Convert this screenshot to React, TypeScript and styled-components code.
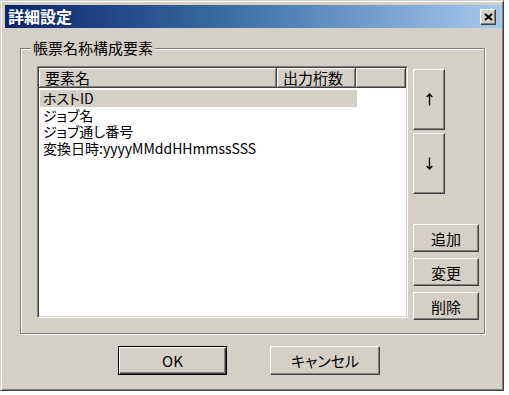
import React from "react";
import styled, { createGlobalStyle, css } from "styled-components";

const Global = createGlobalStyle`
  html, body { margin: 0; padding: 0; background: #ffffff; }
  body { font-family: "Noto Sans CJK JP", "Noto Sans", sans-serif; }
  * { box-sizing: border-box; }
`;

const FONT = `"Noto Sans CJK JP", "Noto Sans", sans-serif`;

const Window = styled.div`
  width: 504px;
  height: 391px;
  background: #d4d0c8;
  border: 1px solid;
  border-color: #d4d0c8 #404040 #404040 #d4d0c8;
  box-shadow: inset 1px 1px 0 #ffffff, inset -1px -1px 0 #808080;
  padding: 4px 1px 2px 4px;
  display: flex;
  flex-direction: column;
  font-family: ${FONT};
  font-feature-settings: "palt";
  color: #000;
`;

const TitleBar = styled.div`
  height: 23px;
  flex: 0 0 23px;
  display: flex;
  align-items: center;
  justify-content: space-between;
  padding: 0 6px 0 3px;
  background: linear-gradient(to right, #0a246a 0%, #3a6ea5 45%, #a6caf0 100%);
`;

const TitleText = styled.span`
  color: #ffffff;
  font-weight: bold;
  font-size: 16px;
  line-height: 23px;
`;

const CloseButton = styled.button`
  width: 16px;
  height: 16px;
  padding: 0;
  display: flex;
  align-items: center;
  justify-content: center;
  background: #d4d0c8;
  border: 1px solid;
  border-color: #ffffff #404040 #404040 #ffffff;
  box-shadow: inset -1px -1px 0 #808080;
`;

const Body = styled.div`
  flex: 1;
  display: flex;
  flex-direction: column;
  padding: 20px 0 0 15px;
`;

const GroupBox = styled.div`
  position: relative;
  width: 465px;
  height: 286px;
  flex-shrink: 0;
  border: 1px solid #808080;
  box-shadow: inset 1px 1px 0 #ffffff, 1px 1px 0 #ffffff;
  padding: 17px 5px 13px 16px;
  display: flex;
  gap: 5px;
`;

const GroupLabel = styled.span`
  position: absolute;
  top: -9px;
  left: 10px;
  padding: 0 2px;
  background: #d4d0c8;
  font-size: 15px;
  line-height: 16px;
`;

const ListView = styled.div`
  width: 371px;
  height: 252px;
  flex-shrink: 0;
  background: #ffffff;
  border: 1px solid;
  border-color: #808080 #ffffff #ffffff #808080;
  box-shadow: inset 1px 1px 0 #404040, inset -1px -1px 0 #d4d0c8;
  padding: 1px;
  display: flex;
  flex-direction: column;
`;

const HeaderRow = styled.div`
  display: flex;
  height: 20px;
  flex: 0 0 20px;
`;

const HeaderCell = styled.div<{ $w?: number }>`
  ${(p) => (p.$w ? css`flex: 0 0 ${p.$w}px;` : css`flex: 1;`)}
  height: 20px;
  background: #d4d0c8;
  border-right: 1px solid #404040;
  border-bottom: 1px solid #404040;
  box-shadow: inset 1px 1px 0 #ffffff, inset -1px -1px 0 #808080;
  padding-left: 6px;
  font-size: 15px;
  line-height: 19px;
  white-space: nowrap;
  overflow: hidden;
`;

const Rows = styled.div`
  display: flex;
  flex-direction: column;
  padding: 2px 0 0 1px;
`;

const Row = styled.div<{ $selected?: boolean }>`
  width: 317px;
  height: 16.5px;
  flex: 0 0 16.5px;
  padding-left: 3px;
  font-size: 14px;
  line-height: 16px;
  white-space: nowrap;
  background: ${(p) => (p.$selected ? "#d4d0c8" : "transparent")};
`;

const SideColumn = styled.div`
  width: 66px;
  flex-shrink: 0;
  display: flex;
  flex-direction: column;
  padding-top: 3px;
`;

const ArrowGroup = styled.div`
  display: flex;
  flex-direction: column;
  gap: 3px;
`;

const ActionGroup = styled.div`
  margin-top: auto;
  display: flex;
  flex-direction: column;
  gap: 6px;
`;

const Button = styled.button<{ $w: number; $h: number; $default?: boolean }>`
  width: ${(p) => p.$w}px;
  height: ${(p) => p.$h}px;
  flex-shrink: 0;
  padding: 0;
  background: #d4d0c8;
  color: #000;
  font-family: ${FONT};
  font-feature-settings: "palt";
  font-size: 15px;
  line-height: 1;
  white-space: nowrap;
  display: flex;
  align-items: center;
  justify-content: center;
  border: 1px solid;
  ${(p) =>
    p.$default
      ? css`
          border-color: #000000;
          box-shadow: inset 1px 1px 0 #ffffff, inset -1px -1px 0 #404040,
            inset -2px -2px 0 #808080;
        `
      : css`
          border-color: #ffffff #404040 #404040 #ffffff;
          box-shadow: inset -1px -1px 0 #808080;
        `}
`;

const Footer = styled.div`
  display: flex;
  justify-content: center;
  gap: 43px;
  padding: 12px 24px 0 0;
`;

const ArrowIcon = ({ down }: { down?: boolean }) => (
  <svg width="7" height="13" viewBox="0 0 7 13" style={{ transform: down ? "rotate(180deg)" : undefined }}>
    <path d="M3.5 1 V12.5 M0.7 4 L3.5 1 L6.3 4" stroke="#000" strokeWidth="1.3" fill="none" />
  </svg>
);

const rows = ["ホストID", "ジョブ名", "ジョブ通し番号", "変換日時:yyyyMMddHHmmssSSS"];

export default function App() {
  return (
    <>
      <Global />
      <Window>
        <TitleBar>
          <TitleText>詳細設定</TitleText>
          <CloseButton aria-label="close">
            <svg width="9" height="8" viewBox="0 0 9 8">
              <path d="M1 1 L8 7 M8 1 L1 7" stroke="#000" strokeWidth="2" fill="none" />
            </svg>
          </CloseButton>
        </TitleBar>
        <Body>
          <GroupBox>
            <GroupLabel>帳票名称構成要素</GroupLabel>
            <ListView>
              <HeaderRow>
                <HeaderCell $w={238}>要素名</HeaderCell>
                <HeaderCell $w={79}>出力桁数</HeaderCell>
                <HeaderCell />
              </HeaderRow>
              <Rows>
                {rows.map((r, i) => (
                  <Row key={r} $selected={i === 0}>
                    {r}
                  </Row>
                ))}
              </Rows>
            </ListView>
            <SideColumn>
              <ArrowGroup>
                <Button $w={32} $h={61} aria-label="up"><ArrowIcon /></Button>
                <Button $w={32} $h={61} aria-label="down"><ArrowIcon down /></Button>
              </ArrowGroup>
              <ActionGroup>
                <Button $w={66} $h={28}>追加</Button>
                <Button $w={66} $h={28}>変更</Button>
                <Button $w={66} $h={28}>削除</Button>
              </ActionGroup>
            </SideColumn>
          </GroupBox>
          <Footer>
            <Button $w={109} $h={29} $default>OK</Button>
            <Button $w={110} $h={29}>キャンセル</Button>
          </Footer>
        </Body>
      </Window>
    </>
  );
}
